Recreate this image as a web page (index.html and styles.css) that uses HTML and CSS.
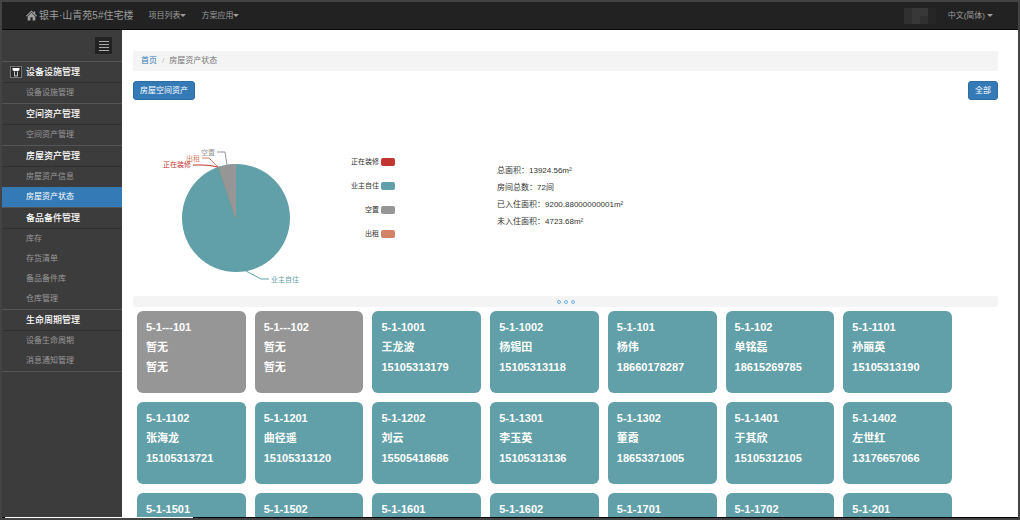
FILE: index.html
```html
<!DOCTYPE html>
<html lang="zh-CN">
<head>
<meta charset="utf-8">
<title>房屋资产状态</title>
<link rel="stylesheet" href="styles.css">
</head>
<body>
<div class="app">
  <header class="navbar">
    <a class="brand" href="#"><svg class="home-icon" viewBox="0 0 12 11" aria-hidden="true"><path d="M6 0 0 5.8l.8.8L6 1.7l5.200 4.900.8-.8-2-2V1H8.500v1.400z"/><path d="M6 2.600 1.800 6.500V11h3V7.500h2.400V11h3V6.500z"/></svg>银丰·山青苑5#住宅楼</a>
    <nav class="nav-links">
      <a class="nav-link" href="#">项目列表<span class="caret"></span></a>
      <a class="nav-link" href="#">方案应用<span class="caret"></span></a>
    </nav>
    <span class="user-mask"><i></i><i></i><i></i><i></i><i></i><i></i><i></i><i></i></span>
    <a class="nav-link lang" href="#">中文(简体) <span class="caret"></span></a>
  </header>
  <div class="body">
    <aside class="sidebar">
      <div class="toggle-row">
        <button class="toggle" type="button" aria-label="菜单"><svg viewBox="0 0 10 10" aria-hidden="true"><path d="M0 .5h10M0 3.500h10M0 6.500h10M0 9.500h10"/></svg></button>
      </div>
      <section class="group">
        <h2 class="group-title"><svg class="device-icon" viewBox="0 0 12 12" aria-hidden="true"><rect class="device-box" x=".5" y=".5" width="11" height="11"/><path class="device-top" d="M2.500 2h7v2l-1 1h-5l-1-1z"/><path class="device-base" d="M4.500 5.500v4.500h3V5.500"/></svg>设备设施管理</h2>
        <a class="item" href="#">设备设施管理</a>
      </section>
      <section class="group">
        <h2 class="group-title">空间资产管理</h2>
        <a class="item" href="#">空间资产管理</a>
      </section>
      <section class="group">
        <h2 class="group-title">房屋资产管理</h2>
        <a class="item" href="#">房屋资产信息</a>
        <a class="item active" href="#">房屋资产状态</a>
      </section>
      <section class="group">
        <h2 class="group-title">备品备件管理</h2>
        <a class="item" href="#">库存</a>
        <a class="item" href="#">存货清单</a>
        <a class="item" href="#">备品备件库</a>
        <a class="item" href="#">仓库管理</a>
      </section>
      <section class="group">
        <h2 class="group-title">生命周期管理</h2>
        <a class="item" href="#">设备生命周期</a>
        <a class="item" href="#">消息通知管理</a>
      </section>
    </aside>
    <main class="main">
      <nav class="breadcrumb"><a href="#">首页</a><span class="sep">/</span><span>房屋资产状态</span></nav>
      <div class="actions">
        <button class="btn" type="button">房屋空间资产</button>
        <button class="btn" type="button">全部</button>
      </div>
      <div class="overview">
        <svg class="pie" viewBox="0 0 200 155" role="img" aria-label="房屋状态">
          <circle class="pie-used" cx="103" cy="78" r="54"/>
          <path class="pie-idle" d="M103 78 86 26.700A54 54 0 0 1 103 24z"/>
          <path class="pie-rent" d="M103 78 85.500 27"/>
          <path class="line-idle" d="M84 12h8l2 13"/>
          <path class="line-rent" d="M69 18h7l9 9"/>
          <path class="line-fix" d="M60 25h9q8 0 16 2"/>
          <path class="line-used" d="M113 131l15 8h8"/>
          <text class="label-idle" x="82" y="15">空置</text>
          <text class="label-rent" x="67" y="21">出租</text>
          <text class="label-fix" x="58" y="27">正在装修</text>
          <text class="label-used" x="138" y="142">业主自住</text>
        </svg>
        <ul class="legend">
          <li>正在装修<span class="swatch fix"></span></li>
          <li>业主自住<span class="swatch used"></span></li>
          <li>空置<span class="swatch idle"></span></li>
          <li>出租<span class="swatch rent"></span></li>
        </ul>
        <div class="totals">
          <p>总面积：13924.56m²</p>
          <p>房间总数：72间</p>
          <p>已入住面积：9200.88000000001m²</p>
          <p>未入住面积：4723.68m²</p>
        </div>
      </div>
      <div class="divider"><span></span><span></span><span></span></div>
      <div class="rooms">
        <article class="room vacant"><p>5-1---101</p><p>暂无</p><p>暂无</p></article>
        <article class="room vacant"><p>5-1---102</p><p>暂无</p><p>暂无</p></article>
        <article class="room"><p>5-1-1001</p><p>王龙波</p><p>15105313179</p></article>
        <article class="room"><p>5-1-1002</p><p>杨锡田</p><p>15105313118</p></article>
        <article class="room"><p>5-1-101</p><p>杨伟</p><p>18660178287</p></article>
        <article class="room"><p>5-1-102</p><p>单铭磊</p><p>18615269785</p></article>
        <article class="room"><p>5-1-1101</p><p>孙丽英</p><p>15105313190</p></article>
        <article class="room"><p>5-1-1102</p><p>张海龙</p><p>15105313721</p></article>
        <article class="room"><p>5-1-1201</p><p>曲径遥</p><p>15105313120</p></article>
        <article class="room"><p>5-1-1202</p><p>刘云</p><p>15505418686</p></article>
        <article class="room"><p>5-1-1301</p><p>李玉英</p><p>15105313136</p></article>
        <article class="room"><p>5-1-1302</p><p>董霞</p><p>18653371005</p></article>
        <article class="room"><p>5-1-1401</p><p>于其欣</p><p>15105312105</p></article>
        <article class="room"><p>5-1-1402</p><p>左世红</p><p>13176657066</p></article>
        <article class="room"><p>5-1-1501</p></article>
        <article class="room"><p>5-1-1502</p></article>
        <article class="room"><p>5-1-1601</p></article>
        <article class="room"><p>5-1-1602</p></article>
        <article class="room"><p>5-1-1701</p></article>
        <article class="room"><p>5-1-1702</p></article>
        <article class="room"><p>5-1-201</p></article>
      </div>
    </main>
  </div>
  <div class="scroll-track"><div class="scroll-thumb"></div></div>
</div>
</body>
</html>
```

FILE: styles.css
```css
* { box-sizing: border-box; }
body {
  margin: 0;
  font: 8px/20px "Liberation Sans", "Noto Sans CJK SC", sans-serif;
  color: #333;
}
a { text-decoration: none; color: inherit; }
p, ul, h2 { margin: 0; padding: 0; }
svg { display: block; }

.app {
  display: flex;
  flex-direction: column;
  height: 100vh;
  overflow: hidden;
  border: 2px solid #444;
}
.navbar {
  display: flex;
  align-items: center;
  flex: none;
  height: 28px;
  padding: 0 25px 0 24px;
  background: #222;
  border-bottom: 1px solid #080808;
  color: #9d9d9d;
}
.brand { display: flex; align-items: center; gap: 2px; font-size: 10px; }
.home-icon { width: 11px; height: 11px; fill: #9d9d9d; }
.nav-links { display: flex; gap: 15px; margin-left: 15px; flex: 1; }
.nav-link { display: flex; align-items: center; }
.lang { gap: 2px; }
.caret { border: 3px solid transparent; border-top-color: #9d9d9d; border-bottom: 0; }
.user-mask { display: grid; grid-template-columns: repeat(4, 8px); grid-auto-rows: 8px; margin-right: 12px; }
.user-mask i { background: #303030; }
.user-mask i:nth-child(2), .user-mask i:nth-child(3), .user-mask i:nth-child(6) { background: #383838; }
.user-mask i:nth-child(4n) { background: #262626; }

.body { display: flex; flex: 1; min-height: 0; }
.sidebar { flex: none; width: 120px; background: #3c3c3c; }
.toggle-row { display: flex; justify-content: flex-end; height: 31px; padding: 7px 10px; }
.toggle {
  display: grid;
  place-items: center;
  width: 17px;
  height: 17px;
  padding: 0;
  border: 0;
  background: #222;
}
.toggle svg { width: 10px; height: 10px; stroke: #aaa; }
.group { border-top: 1px solid #555; }
.group:last-child { border-bottom: 1px solid #555; }
.group-title {
  display: flex;
  align-items: center;
  height: 21px;
  padding-left: 24px;
  border-bottom: 1px solid #303030;
  font-size: 9px;
  font-weight: 500;
  color: #fff;
}
.device-icon { width: 12px; height: 12px; margin: 0 4px 0 -16px; }
.device-box { fill: #292929; stroke: #777; }
.device-top { fill: #fff; }
.device-base { fill: none; stroke: #ccc; }
.item { display: block; height: 20px; padding-left: 24px; color: #999; }
.item.active { background: #337ab7; color: #fff; }

.main {
  flex: 1;
  min-width: 0;
  overflow: hidden;
  padding: 21px 20px 0 11px;
  background: #fff;
}
.breadcrumb {
  display: flex;
  gap: 5px;
  height: 20px;
  padding: 0 8px;
  border-radius: 2px;
  background: #f4f4f4;
  color: #777;
}
.breadcrumb a { color: #337ab7; }
.sep { color: #bbb; }
.actions { display: flex; justify-content: space-between; margin-top: 10px; }
.btn {
  height: 19px;
  padding: 0 6px;
  border: 1px solid #2e6da4;
  border-radius: 3px;
  background: #337ab7;
  color: #fff;
  font: inherit;
  line-height: 17px;
}
.overview { display: flex; align-items: flex-start; height: 156px; margin-top: 40px; }
.pie { flex: none; width: 200px; height: 155px; font-size: 7px; }
.pie path { fill: none; stroke-width: 1; }
.pie .pie-idle { fill: #969696; }
.pie-used { fill: #61a0a8; }
.pie-rent { stroke: #d48265; opacity: .5; }
.line-idle { stroke: #969696; }
.line-rent { stroke: #d48265; }
.line-fix { stroke: #c23531; }
.line-used { stroke: #61a0a8; }
.label-idle { fill: #969696; text-anchor: end; }
.label-rent { fill: #d48265; text-anchor: end; }
.label-fix { fill: #c23531; text-anchor: end; }
.label-used { fill: #61a0a8; }
.legend {
  display: grid;
  gap: 4px;
  width: 62px;
  margin-top: 12px;
  list-style: none;
  font-size: 7px;
}
.legend li { display: flex; align-items: center; justify-content: flex-end; gap: 2px; }
.swatch { width: 14px; height: 8px; border-radius: 2px; }
.fix { background: #c23531; }
.used { background: #61a0a8; }
.idle { background: #969696; }
.rent { background: #d48265; }
.totals { margin: 22px 0 0 102px; line-height: 17px; }
.divider {
  display: flex;
  align-items: center;
  justify-content: center;
  gap: 3px;
  height: 11px;
  border-radius: 3px;
  background: #f4f4f4;
}
.divider span { width: 4px; height: 4px; border: 1px solid #6db3e8; border-radius: 2px; }
.rooms {
  display: grid;
  grid-template-columns: repeat(7, 1fr);
  grid-auto-rows: 82px;
  gap: 9px;
  padding: 4px 46px 0 4px;
}
.room {
  padding: 6px 9px;
  border-radius: 6px;
  background: #61a0a8;
  color: #fff;
  font-size: 11px;
  font-weight: 700;
}
.vacant { background: #969696; }
.scroll-track { flex: none; height: 1px; background: #000; padding-left: 3px; }
.scroll-thumb { width: 188px; height: 1px; background: #fff; }
```
